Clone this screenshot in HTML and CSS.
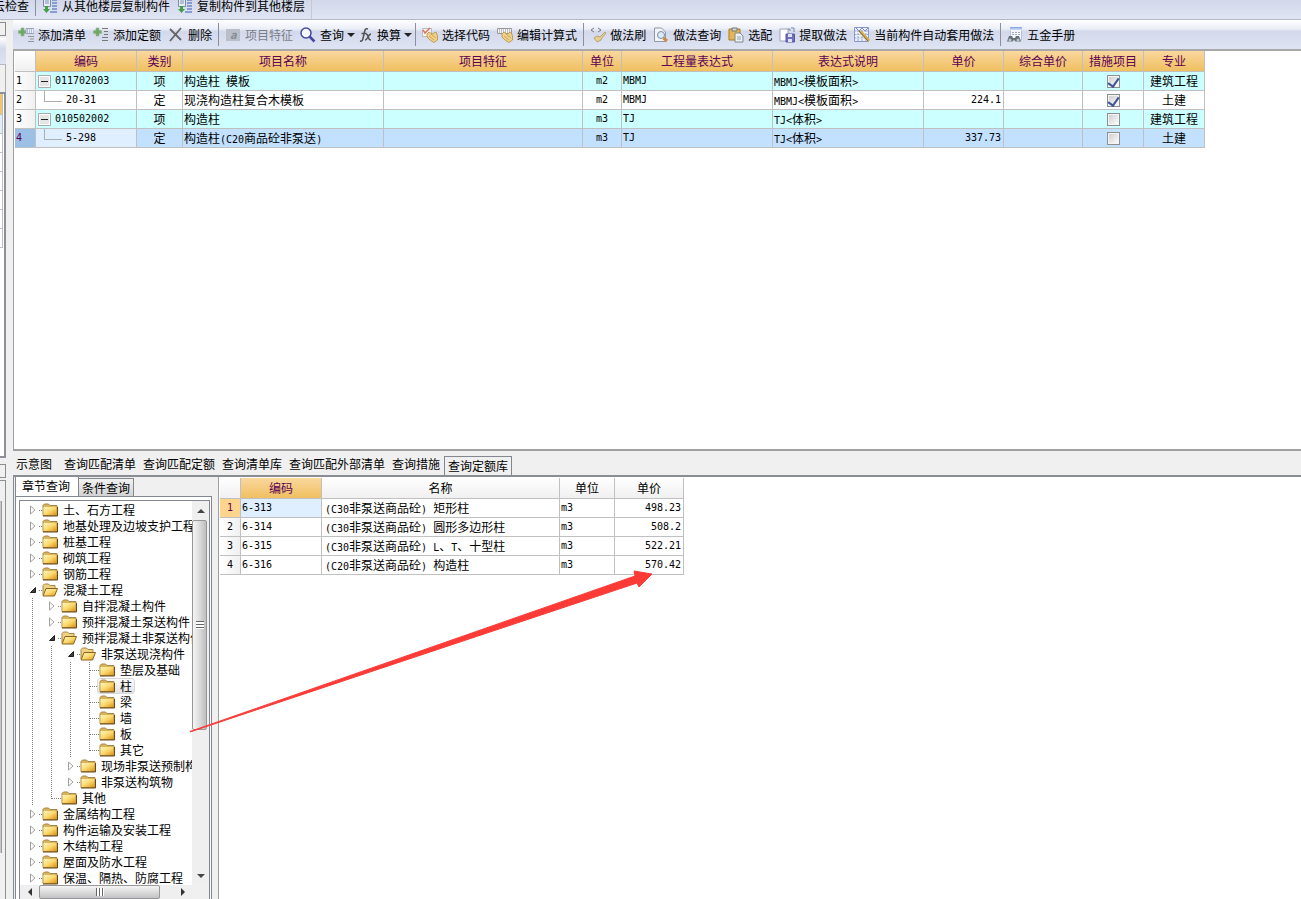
FILE: index.html
```html
<!DOCTYPE html>
<html lang="zh-CN">
<head>
<meta charset="utf-8">
<title>构件做法</title>
<link rel="stylesheet" href="styles.css">
</head>
<body>
<svg class="defs" aria-hidden="true">
  <defs>
    <linearGradient id="gold" x1="0" y1="0" x2="1" y2="1"><stop offset="0" stop-color="#fff6bd"/><stop offset=".5" stop-color="#fbd970"/><stop offset="1" stop-color="#dd9514"/></linearGradient>
    <linearGradient id="blue" x1="0" y1="0" x2="0" y2="1"><stop offset="0" stop-color="#7ea0e4"/><stop offset="1" stop-color="#e8effc"/></linearGradient>
    <symbol id="folder" viewBox="0 0 16 14"><path d="M1 12.500V2.500L2.500 1h4L8 2.500h7v10z" fill="#d9b45a" stroke="#a78645"/><path d="M1.500 4h13v8h-13z" fill="url(#gold)"/><path d="M1 13h14.500V4" fill="none" stroke="#6b4a18"/></symbol>
    <symbol id="open" viewBox="0 0 16 14"><path d="M1 12V2.500L2.500 1h4L8 2.500h5V5" fill="#efd084" stroke="#a78645"/><path d="M4 5.500h11.500L12.500 13H1z" fill="url(#gold)" stroke="#8a651f"/></symbol>
    <symbol id="closed" viewBox="0 0 8 10"><path d="M1.500 1v8L6 5z" fill="#fff" stroke="#a0a0a0"/></symbol>
    <symbol id="expanded" viewBox="0 0 8 10"><path d="M6.500 2.500v5H1.500z" fill="#404040" stroke="#202020"/></symbol>
    <symbol id="plus" viewBox="0 0 16 16"><path d="M3 1h3v2.500h2.500v3H6V9H3V6.500H.5v-3H3z" fill="#6fa866" stroke="#94bb8c" stroke-width=".6"/></symbol>
    <symbol id="copy" viewBox="0 0 16 16"><path d="M1.500.5h7v8h-7z" fill="#e6edf7" stroke="#7d8ba3"/><path d="M3 3h4M3 5h4" stroke="#7d93b8"/><path d="M3 8h3v3h2l-3.500 4L1 11h2z" fill="#43a047"/><path d="M10 2h5M10 5h5M10 8h5M10 11h5M8 14h7" stroke="#6c88c8" stroke-width="1.500"/></symbol>
    <symbol id="hand" viewBox="0 0 16 16"><path d="M5 7l2-2 3 2 4-2 1.500 4v4L12 15.500 8 13 5 10z" fill="#efd28b" stroke="#b98d3d" stroke-width=".8"/><path d="M7 9l5 4M9 7l5 4" stroke="#b98d3d" stroke-width=".7"/></symbol>
    <symbol id="minus" viewBox="0 0 13 13"><path d="M.5.5h12v12H.5z" fill="#fff" stroke="#aaa"/><path d="M2 2h9v9H2z" fill="#e5e5e5"/><path d="M3 6.500h7" stroke="#222"/></symbol>
  </defs>
</svg>

<nav class="strip">
  <button class="tool cut">云检查</button>
  <span class="sep"></span>
  <button class="tool"><svg class="icon"><use href="#copy"/></svg>从其他楼层复制构件</button>
  <button class="tool"><svg class="icon"><use href="#copy"/></svg>复制构件到其他楼层</button>
  <span class="sep light"></span>
</nav>

<div class="workspace">
  <aside class="sliver top">
    <div class="knob"></div>
    <div class="mini-bar"></div>
    <div class="mini-gap"></div>
    <div class="mini-grid"><i class="gold"></i><i class="sel"></i><i></i><i></i><i></i><i></i><i></i><i></i></div>
  </aside>
  <main class="upper">
    <div class="toolbar">
      <button class="tool"><svg class="icon" viewBox="0 0 16 16"><use href="#plus"/><path d="M8 1.500h8v5H8z" fill="#eef" stroke="#99a6b8"/><path d="M9 3h6M9 5h6" stroke="#7585a8" stroke-dasharray="1"/><path d="M10 9.500h6M12 12h4M10 14.500h6" stroke="#969696"/></svg>添加清单</button>
      <button class="tool"><svg class="icon" viewBox="0 0 16 16"><use href="#plus"/><path d="M9 1.500h6M11 4.500h4M11 7.500h4M9 10.500h6M9 13.500h6" stroke="#777"/></svg>添加定额</button>
      <button class="tool"><svg class="icon" viewBox="0 0 16 16"><path d="M2 2l11 11M13 1L2 14" stroke="#656565" stroke-width="1.800"/></svg>删除</button>
      <span class="sep"></span>
      <button class="tool" disabled><svg class="icon" viewBox="0 0 16 16"><path d="M1 2h14v12H1z" fill="#b9bec9"/><text x="5" y="12" font-size="11" font-weight="bold" font-style="italic" fill="#858b97">a</text></svg>项目特征</button>
      <button class="tool drop"><svg class="icon" viewBox="0 0 16 16"><circle cx="6" cy="6" r="5" fill="#f7faff" stroke="#4548a0" stroke-width="1.500"/><path d="M9.500 9.500l5 5" stroke="#4548a0" stroke-width="2.500"/></svg>查询<i class="arrow"></i></button>
      <button class="tool drop"><svg class="icon fx" viewBox="0 0 14 16"><path d="M1 14c3 1 3-3 4-7s1-6 4-5M2.500 6.500h5M7 7c3 0 1 6 5 6M12 7c-3 0-3 6-6 6" fill="none" stroke="#555" stroke-width="1.600"/></svg>换算<i class="arrow"></i></button>
      <span class="sep"></span>
      <button class="tool"><svg class="icon" viewBox="0 0 16 16"><path d="M.5 1.500h9v8h-9z" fill="#f5f5f8" stroke="#bbb"/><path d="M1 3l2 3 5-5" fill="none" stroke="#dd7464" stroke-width="1.500"/><use href="#hand"/></svg>选择代码</button>
      <button class="tool"><svg class="icon" viewBox="0 0 16 16"><path d="M.5 1.500h14v5H.5z" fill="#f5f5f8" stroke="#999"/><path d="M2 3h12M2 5h12" stroke="#888" stroke-dasharray="1"/><use href="#hand"/></svg>编辑计算式</button>
      <span class="sep"></span>
      <button class="tool"><svg class="icon" viewBox="0 0 16 16"><path d="M4 1L1 3l3 2M8 1l3 2-3 2" fill="none" stroke="#777"/><path d="M15 5l-5 5-3-1-3 2 3 4 4-2 1-2 4-5z" fill="#e8ce90" stroke="#a98b57" stroke-width=".7"/></svg>做法刷</button>
      <button class="tool"><svg class="icon" viewBox="0 0 16 16"><path d="M1.500 1h7l4 4v9.500h-11z" fill="#f2f4f8" stroke="#9097a5"/><circle cx="8" cy="8" r="3.500" fill="#dcebf7" stroke="#7d8da0"/><path d="M10.500 11l3.500 3" stroke="#cc8a45" stroke-width="3"/></svg>做法查询</button>
      <button class="tool"><svg class="icon" viewBox="0 0 16 16"><path d="M1 2h11v11H1z" fill="#e6b650" stroke="#a67b28"/><path d="M4 1h5v3H4z" fill="#d5d8dd" stroke="#777"/><path d="M7 6h5l3 3v6H7z" fill="#eef2f7" stroke="#7f8794"/><path d="M9 10h4M9 12h4" stroke="#8ea0b5"/></svg>选配</button>
      <button class="tool"><svg class="icon" viewBox="0 0 16 16"><path d="M1 2h8v12H1z" fill="#fff" stroke="#98a2b5"/><path d="M7 7h8.500v8H7z" fill="#6f6fb8" stroke="#5757a0"/><path d="M9 7h4v3H9zM9 12h4v3H9z" fill="#dfe4f5"/><path d="M9 2h2v2M12 1h3v4" fill="none" stroke="#7584a0"/></svg>提取做法</button>
      <button class="tool"><svg class="icon" viewBox="0 0 16 16"><path d="M.5.5h14v14H.5z" fill="#eef2fd" stroke="#8796cf"/><path d="M.5 4h14M.5 7.500h14M.5 11h14M4 3v11M8 3v11M12 3v11" stroke="#98a6d8" stroke-dasharray="2 1"/><path d="M2 1l3 3 3-3 3 3 3-3" fill="none" stroke="#7d8ccb"/><path d="M6 4l9 10" stroke="#d9ad4a" stroke-width="3"/><path d="M5 4l9 10" stroke="#77694e"/></svg>当前构件自动套用做法</button>
      <span class="sep"></span>
      <button class="tool"><svg class="icon" viewBox="0 0 16 16"><path d="M3.500.5h11V13h-11z" fill="#f4f7fd" stroke="#b4bfd6"/><path d="M3 0h12v3.500H3z" fill="url(#blue)"/><path d="M5 5.500h8M5 7.500h8" stroke="#a4a9b5" stroke-dasharray="2 1"/><path d="M2 9h3l1 2h2l1-2h3l2 5.500H8.500L7 12.500 5.500 14.500H0z" fill="#66707a"/><circle cx="3" cy="13" r="1.500" fill="#b9c8c8"/><circle cx="11" cy="13" r="1.500" fill="#b9c8c8"/></svg>五金手册</button>
    </div>
    <div class="pane">
      <table class="grid main-grid">
        <colgroup><col class="w21"><col class="w101"><col class="w46"><col class="w201"><col class="w199"><col class="w39"><col class="w151"><col class="w151"><col class="w80"><col class="w79"><col class="w61"><col class="w61"></colgroup>
        <thead><tr><th class="corner"></th><th>编码</th><th>类别</th><th>项目名称</th><th>项目特征</th><th>单位</th><th>工程量表达式</th><th>表达式说明</th><th>单价</th><th>综合单价</th><th>措施项目</th><th>专业</th></tr></thead>
        <tbody>
          <tr class="cyan"><th class="num">1</th><td><span class="code"><svg class="box"><use href="#minus"/></svg><b class="en">011702003</b></span></td><td class="c">项</td><td>构造柱<b class="en">&nbsp;</b>模板</td><td></td><td class="c en">m2</td><td class="en">MBMJ</td><td><b class="en">MBMJ&lt;</b>模板面积<b class="en">&gt;</b></td><td></td><td></td><td class="c"><input type="checkbox" aria-label="措施项目 1" checked></td><td class="c">建筑工程</td></tr>
          <tr><th class="num">2</th><td><span class="code child"><b class="en">20-31</b></span></td><td class="c">定</td><td>现浇构造柱复合木模板</td><td></td><td class="c en">m2</td><td class="en">MBMJ</td><td><b class="en">MBMJ&lt;</b>模板面积<b class="en">&gt;</b></td><td class="r en">224.1</td><td></td><td class="c"><input type="checkbox" aria-label="措施项目 2" checked></td><td class="c">土建</td></tr>
          <tr class="cyan"><th class="num">3</th><td><span class="code"><svg class="box"><use href="#minus"/></svg><b class="en">010502002</b></span></td><td class="c">项</td><td>构造柱</td><td></td><td class="c en">m3</td><td class="en">TJ</td><td><b class="en">TJ&lt;</b>体积<b class="en">&gt;</b></td><td></td><td></td><td class="c"><input type="checkbox" aria-label="措施项目 3"></td><td class="c">建筑工程</td></tr>
          <tr class="selected"><th class="num">4</th><td class="focus"><span class="code child"><b class="en">5-298</b></span></td><td class="c">定</td><td>构造柱<b class="en">(C20</b>商品砼非泵送<b class="en">)</b></td><td></td><td class="c en">m3</td><td class="en">TJ</td><td><b class="en">TJ&lt;</b>体积<b class="en">&gt;</b></td><td class="r en">337.73</td><td></td><td class="c"><input type="checkbox" aria-label="措施项目 4"></td><td class="c">土建</td></tr>
        </tbody>
      </table>
    </div>
  </main>

  <aside class="sliver bottom">
    <div class="knob"></div>
    <div class="mini-panel"><div class="mini-thumb"></div></div>
  </aside>
  <section class="lower">
    <div class="tabs">
      <button class="tab first">示意图</button><button class="tab">查询匹配清单</button><button class="tab">查询匹配定额</button><button class="tab">查询清单库</button><button class="tab">查询匹配外部清单</button><button class="tab">查询措施</button><button class="tab boxed">查询定额库</button>
    </div>
    <div class="query">
      <div class="side">
        <div class="side-tabs"><button class="side-tab on">章节查询</button><button class="side-tab">条件查询</button></div>
        <div class="side-panel">
          <div class="tree-box">
            <ul class="tree">
              <li><i class="cell"><svg class="chev"><use href="#closed"/></svg></i><span class="node"><svg class="fold"><use href="#folder"/></svg>土、石方工程</span></li>
              <li><i class="cell"><svg class="chev"><use href="#closed"/></svg></i><span class="node"><svg class="fold"><use href="#folder"/></svg>地基处理及边坡支护工程</span></li>
              <li><i class="cell"><svg class="chev"><use href="#closed"/></svg></i><span class="node"><svg class="fold"><use href="#folder"/></svg>桩基工程</span></li>
              <li><i class="cell"><svg class="chev"><use href="#closed"/></svg></i><span class="node"><svg class="fold"><use href="#folder"/></svg>砌筑工程</span></li>
              <li><i class="cell"><svg class="chev"><use href="#closed"/></svg></i><span class="node"><svg class="fold"><use href="#folder"/></svg>钢筋工程</span></li>
              <li><i class="cell"><svg class="chev"><use href="#expanded"/></svg></i><span class="node"><svg class="fold"><use href="#open"/></svg>混凝土工程</span></li>
              <li><i class="line"></i><i class="cell"><svg class="chev"><use href="#closed"/></svg></i><span class="node"><svg class="fold"><use href="#folder"/></svg>自拌混凝土构件</span></li>
              <li><i class="line"></i><i class="cell"><svg class="chev"><use href="#closed"/></svg></i><span class="node"><svg class="fold"><use href="#folder"/></svg>预拌混凝土泵送构件</span></li>
              <li><i class="line"></i><i class="cell"><svg class="chev"><use href="#expanded"/></svg></i><span class="node"><svg class="fold"><use href="#open"/></svg>预拌混凝土非泵送构件</span></li>
              <li><i class="line"></i><i class="line"></i><i class="cell"><svg class="chev"><use href="#expanded"/></svg></i><span class="node"><svg class="fold"><use href="#open"/></svg>非泵送现浇构件</span></li>
              <li><i class="line"></i><i class="line"></i><i class="line"></i><i class="line leaf"></i><span class="node"><svg class="fold"><use href="#folder"/></svg>垫层及基础</span></li>
              <li><i class="line"></i><i class="line"></i><i class="line"></i><i class="line leaf"></i><span class="node picked"><svg class="fold"><use href="#folder"/></svg>柱</span></li>
              <li><i class="line"></i><i class="line"></i><i class="line"></i><i class="line leaf"></i><span class="node"><svg class="fold"><use href="#folder"/></svg>梁</span></li>
              <li><i class="line"></i><i class="line"></i><i class="line"></i><i class="line leaf"></i><span class="node"><svg class="fold"><use href="#folder"/></svg>墙</span></li>
              <li><i class="line"></i><i class="line"></i><i class="line"></i><i class="line leaf"></i><span class="node"><svg class="fold"><use href="#folder"/></svg>板</span></li>
              <li><i class="line"></i><i class="line"></i><i class="line"></i><i class="line leaf last"></i><span class="node"><svg class="fold"><use href="#folder"/></svg>其它</span></li>
              <li><i class="line"></i><i class="line"></i><i class="cell"><svg class="chev"><use href="#closed"/></svg></i><span class="node"><svg class="fold"><use href="#folder"/></svg>现场非泵送预制构件</span></li>
              <li><i class="line"></i><i class="line"></i><i class="cell"><svg class="chev"><use href="#closed"/></svg></i><span class="node"><svg class="fold"><use href="#folder"/></svg>非泵送构筑物</span></li>
              <li><i class="line"></i><i class="line leaf last"></i><span class="node"><svg class="fold"><use href="#folder"/></svg>其他</span></li>
              <li><i class="cell"><svg class="chev"><use href="#closed"/></svg></i><span class="node"><svg class="fold"><use href="#folder"/></svg>金属结构工程</span></li>
              <li><i class="cell"><svg class="chev"><use href="#closed"/></svg></i><span class="node"><svg class="fold"><use href="#folder"/></svg>构件运输及安装工程</span></li>
              <li><i class="cell"><svg class="chev"><use href="#closed"/></svg></i><span class="node"><svg class="fold"><use href="#folder"/></svg>木结构工程</span></li>
              <li><i class="cell"><svg class="chev"><use href="#closed"/></svg></i><span class="node"><svg class="fold"><use href="#folder"/></svg>屋面及防水工程</span></li>
              <li><i class="cell"><svg class="chev"><use href="#closed"/></svg></i><span class="node"><svg class="fold"><use href="#folder"/></svg>保温、隔热、防腐工程</span></li>
            </ul>
            <div class="vbar"><i class="end up"></i><i class="thumb"><i class="grip"></i></i><i class="track"></i><i class="end down"></i></div>
            <div class="hbar"><i class="end left"></i><i class="thumb"><i class="grip"></i></i><i class="end right"></i></div>
            <div class="size-corner"></div>
          </div>
        </div>
      </div>
      <div class="results">
        <table class="grid plain">
          <colgroup><col class="w21"><col class="w81"><col class="w238"><col class="w55"><col class="w69"></colgroup>
          <thead><tr><th class="corner"></th><th class="hot">编码</th><th>名称</th><th>单位</th><th>单价</th></tr></thead>
          <tbody>
            <tr><th class="num hot-num">1</th><td class="en focus">6-313</td><td class="name"><b class="en">(C30</b>非泵送商品砼<b class="en">)&nbsp;</b>矩形柱</td><td class="en">m3</td><td class="r en">498.23</td></tr>
            <tr><th class="num">2</th><td class="en">6-314</td><td class="name"><b class="en">(C30</b>非泵送商品砼<b class="en">)&nbsp;</b>圆形多边形柱</td><td class="en">m3</td><td class="r en">508.2</td></tr>
            <tr><th class="num">3</th><td class="en">6-315</td><td class="name"><b class="en">(C30</b>非泵送商品砼<b class="en">)&nbsp;L</b>、<b class="en">T</b>、十型柱</td><td class="en">m3</td><td class="r en">522.21</td></tr>
            <tr><th class="num">4</th><td class="en">6-316</td><td class="name"><b class="en">(C20</b>非泵送商品砼<b class="en">)&nbsp;</b>构造柱</td><td class="en">m3</td><td class="r en">570.42</td></tr>
          </tbody>
        </table>
      </div>
      <svg class="pointer" viewBox="0 0 462 160" aria-hidden="true"><path d="M0 160.500L445 5 444 0l18 3-13 13-2-4L0 161z" fill="#fc3b37" stroke="#fc3b37"/></svg>
    </div>
  </section>
</div>
</body>
</html>
```

FILE: styles.css
```css
* { box-sizing: border-box; }
body {
  margin: 0;
  height: 100vh;
  display: flex;
  flex-direction: column;
  overflow: hidden;
  background: #f0f0f0;
  color: #000;
  font: 12px/18px "Noto Sans CJK SC", sans-serif;
}
button {
  font: inherit;
  color: inherit;
  padding: 0;
  border: 0;
  background: none;
  white-space: nowrap;
}
i, b { font-style: normal; font-weight: normal; }
.defs { position: absolute; width: 0; height: 0; }
.en, .num { font-family: "DejaVu Sans Mono", monospace; font-size: 10px; }
b.en { line-height: 10px; }

/* command bars */
.strip {
  display: flex;
  gap: 7px;
  height: 20px;
  flex: none;
  align-items: flex-start;
  overflow: hidden;
  background: linear-gradient(#d2d8ea, #e0e5f5);
  border-bottom: 1px solid #b4b9c4;
}
.strip .tool { height: 12px; line-height: 12px; }
.cut { margin-left: -7px; }
.tool { display: flex; align-items: center; gap: 4px; flex: none; }
.tool:disabled { color: #7b7e88; }
.icon { width: 16px; height: 16px; flex: none; }
.fx { width: 14px; }
.drop { margin-right: -3px; }
.arrow {
  margin-left: -1px;
  border: 4px solid transparent;
  border-top-color: #222;
  border-bottom: 0;
}
.sep { width: 1px; height: 23px; margin: 0 -1px; background: #8d9099; flex: none; }
.strip .sep { height: 16px; }
.strip .sep.light { height: 20px; background: #c5c9d5; }
.toolbar {
  display: flex;
  gap: 7px;
  align-items: center;
  height: 31px;
  flex: none;
  padding-left: 5px;
  overflow: hidden;
  background: linear-gradient(#fff 0%, #eceff8 30%, #d3d9eb 40%, #dfe4f4 100%);
  border-bottom: 2px solid #a8a8a8;
}

.workspace {
  flex: 1;
  min-height: 0;
  display: grid;
  grid-template-columns: 13px minmax(0, 1fr);
  grid-template-rows: 431fr 448fr;
}
.upper { display: flex; flex-direction: column; min-height: 0; }
.pane {
  flex: 1;
  background: #fff;
  border-left: 1px solid #a0a0a0;
  border-bottom: 2px solid #a0a0a0;
  padding-left: 1px;
}

/* clipped neighbouring panel */
.sliver { display: flex; flex-direction: column; width: 6px; min-height: 0; }
.knob { height: 14px; margin: 2px 0; flex: none; border: 1px solid #8c8c8c; border-left: 0; }
.mini-bar { height: 27px; background: linear-gradient(#fff, #d3d9eb 40%, #dfe4f4); border-bottom: 1px solid #b4b9c4; }
.mini-gap { height: 27px; border-right: 1px solid #b0b0b0; }
.mini-grid { flex: 1; margin-bottom: -7px; background: #fff; border: solid #8e9099; border-width: 2px 2px 2px 0; }
.mini-grid i { display: block; height: 19px; width: 3px; border: solid #c0c0c0; border-width: 0 1px 1px 0; }
.mini-grid .gold { height: 21px; background: #f3c46a; }
.mini-grid .sel { background: #dfeeff; }
.sliver.bottom { padding-top: 11px; }
.mini-panel { flex: 1; background: #f0f0f0; border: solid #8e9099; border-width: 1px 1px 0 0; }
.mini-thumb { width: 2px; height: 352px; margin-top: 20px; background: #c8c8cb; border-right: 1px solid #98989d; }

/* data grids */
.grid { table-layout: fixed; width: 0; border-collapse: separate; border-spacing: 0; background: #fff; }
.grid th, .grid td {
  height: 19px;
  padding: 0 2px 0 1px;
  line-height: 18px;
  border: solid #c0c0c0;
  border-width: 0 1px 1px 0;
  white-space: nowrap;
  overflow: hidden;
  font-weight: normal;
  text-align: left;
}
.grid thead th { height: 21px; text-align: center; padding: 0; }
.main-grid thead th, .grid thead .hot { background: linear-gradient(#f9d79e, #f0bf60); color: #5c0055; }
.plain thead th, .grid thead .corner { background: linear-gradient(#fff, #f0f0f0); }
.grid .num { background: linear-gradient(90deg, #fff, #f0f0f0); }
.plain .num { text-align: center; padding: 0; }
.grid .c { text-align: center; padding: 0; }
.grid .r { text-align: right; }
.grid .name { padding-left: 3px; }
.cyan td { background: #ccffff; }
.selected td { background: #c2e0ff; }
.grid .selected .num { background: #9cbfe6; color: #5c0055; }
.grid .focus { background: #e0efff; }
.grid .hot-num { background: #ffd48c; color: #5c0055; }
.w21 { width: 21px; } .w39 { width: 39px; } .w46 { width: 46px; } .w55 { width: 55px; }
.w61 { width: 61px; } .w69 { width: 69px; } .w79 { width: 79px; } .w80 { width: 80px; }
.w81 { width: 81px; } .w101 { width: 101px; } .w151 { width: 151px; } .w199 { width: 199px; }
.w201 { width: 201px; } .w238 { width: 238px; }
.code { display: flex; align-items: center; gap: 4px; height: 18px; padding-left: 1px; }
.box { width: 13px; height: 13px; flex: none; }
.child::before {
  content: "";
  width: 17px;
  height: 10px;
  margin: -8px 0 0 6px;
  border: solid #b0b0b0;
  border-width: 0 0 1px 1px;
}
input[type="checkbox"] {
  appearance: none;
  display: block;
  width: 13px;
  height: 13px;
  margin: 0 auto;
  border: 1px solid #8e8f8f;
  background: linear-gradient(135deg, #ccc, #fff);
  box-shadow: inset 0 0 0 1px #f4f4f4;
}
input:checked::before {
  content: "";
  display: block;
  width: 5px;
  height: 9px;
  margin: 0 auto;
  border: solid #3d5595;
  border-width: 0 2px 2px 0;
  transform: rotate(35deg);
}

/* lower area */
.lower { display: flex; flex-direction: column; min-height: 0; }
.tabs {
  display: flex;
  gap: 7px;
  height: 26px;
  flex: none;
  padding: 3px 0 0 3px;
  border-bottom: 2px solid #8b8d94;
}
.tab { height: 19px; }
.tab.first { margin-right: 5px; }
.tab.boxed { height: 19px; margin: 2px 0 0 -3px; padding: 0 3px; border: solid #828790; border-width: 1px 1px 0; }
.query { position: relative; flex: 1; min-height: 0; display: flex; border-left: 1px solid #828790; }
.side { width: 205px; flex: none; display: flex; flex-direction: column; padding: 0 6px 0 1px; border-right: 1px solid #a0a0a0; min-height: 0; }
.side-tabs { display: flex; height: 19px; flex: none; align-items: flex-end; }
.side-tab { height: 18px; line-height: 18px; padding: 0 3px; border: solid #828790; border-width: 1px 1px 0 0; background: linear-gradient(#f2f2f2, #d2d2d2); }
.side-tab.on { height: 19px; padding: 0 8px 1px 6px; border-width: 0 1px 0 1px; background: #fff; }
.side-panel { flex: 1; min-height: 0; display: flex; background: #fff; border: solid #828790; border-width: 1px 1px 0 1px; padding: 3px 1px 0 3px; }
.tree-box {
  flex: 1;
  min-width: 0;
  display: grid;
  grid-template-columns: minmax(0, 1fr) 17px;
  grid-template-rows: minmax(0, 1fr) 14px;
  border: solid #828790;
  border-width: 1px 1px 0 1px;
}
.tree { margin: 0; padding: 1px 0 0 3px; list-style: none; overflow: hidden; line-height: 16px; }
.tree li { display: flex; height: 16px; }
.cell, .line { display: flex; align-items: center; width: 19px; height: 16px; flex: none; }
.cell::after { content: ""; width: 3px; margin-left: 2px; border-top: 1px dotted #808080; }
.chev { width: 8px; height: 10px; margin-left: 6px; flex: none; }
.line { background: repeating-linear-gradient(#808080 0 1px, transparent 1px 2px) 9px 0 / 1px 16px no-repeat; }
.line.last { background-size: 1px 9px; }
.leaf::after { content: ""; width: 9px; margin-left: 10px; border-top: 1px dotted #808080; }
.node { display: flex; align-items: center; gap: 5px; white-space: nowrap; }
.picked { margin-left: -2px; padding: 0 2px 0 1px; border: 1px solid #d9d9d9; border-radius: 3px; background: linear-gradient(#fafafa, #e5e5e5); }
.fold { width: 16px; height: 14px; flex: none; }
.vbar, .hbar { display: flex; background: #efefef; }
.vbar { flex-direction: column; }
.size-corner { background: #f0f0f0; }
.end { display: flex; flex: none; align-items: center; justify-content: center; width: 17px; height: 19px; }
.hbar .end { width: 19px; height: 14px; }
.end::after { content: ""; border: 4px solid transparent; }
.up::after { border-bottom-color: #444; border-top: 0; }
.down::after { border-top-color: #444; border-bottom: 0; }
.left::after { border-right-color: #333; border-left: 0; }
.right::after { border-left-color: #333; border-right: 0; }
.thumb { display: flex; align-items: center; justify-content: center; border: 1px solid #979797; border-radius: 2px; }
.vbar .thumb { flex: 209; width: 15px; background: linear-gradient(90deg, #f5f5f5, #dcdcdc 50%, #bebec2); }
.track { flex: 137; }
.hbar { justify-content: space-between; }
.hbar .thumb { flex: 0 0 121px; margin-right: auto; background: linear-gradient(#f5f5f5, #dcdcdc 50%, #c2c2c6); }
.grip { width: 8px; height: 8px; background: repeating-linear-gradient(#666 0 1px, #fff 1px 3px); }
.hbar .grip { background: repeating-linear-gradient(90deg, #666 0 1px, #fff 1px 3px); }
.results { flex: 1; min-width: 0; padding: 1px 0 0 1px; background: #fff; }
.pointer { position: absolute; left: 176px; top: 94px; width: 462px; height: 160px; overflow: visible; pointer-events: none; }
```
